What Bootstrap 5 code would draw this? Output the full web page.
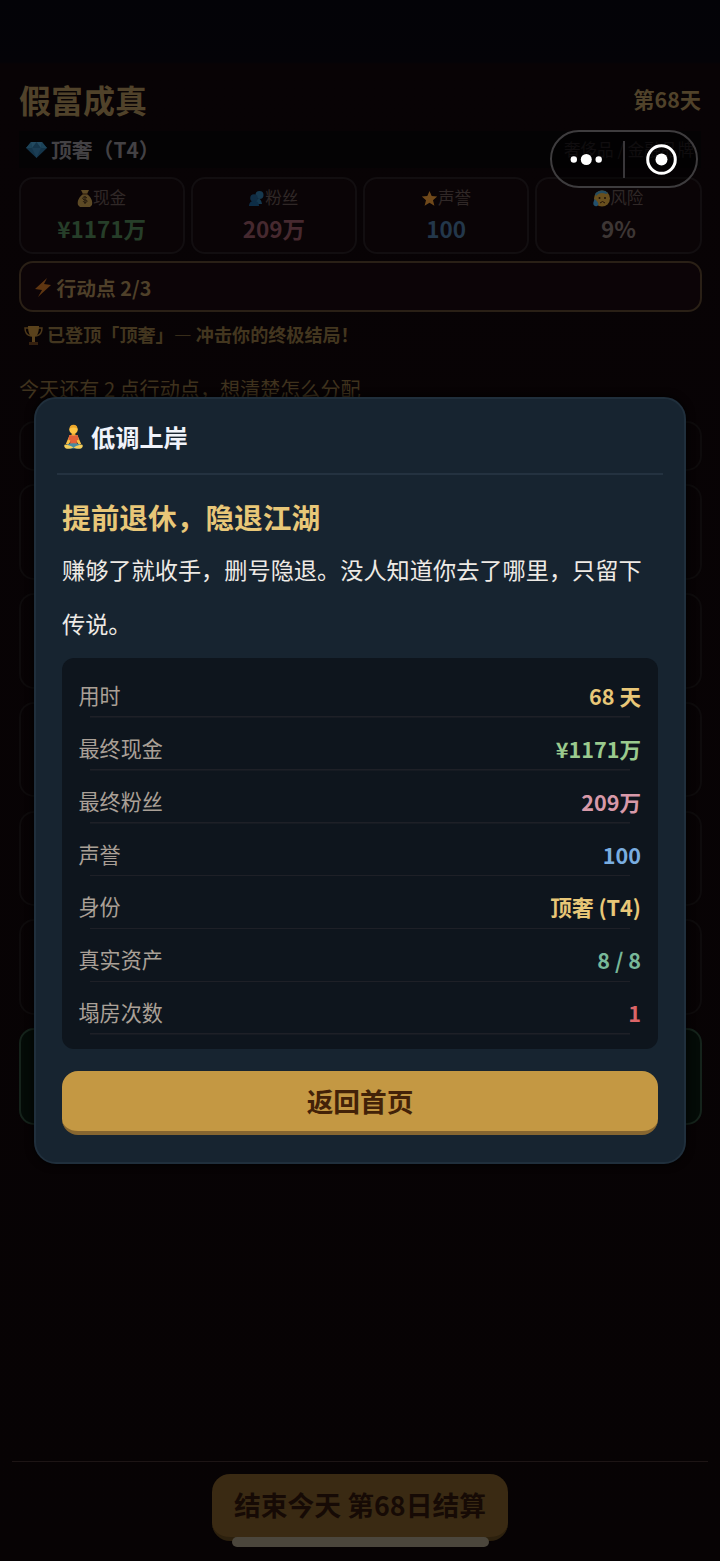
<!DOCTYPE html>
<html lang="zh-CN">
<head>
<meta charset="utf-8">
<meta name="viewport" content="width=device-width, initial-scale=1">
<title>假富成真</title>
<link href="https://cdn.jsdelivr.net/npm/bootstrap@5.3.0/dist/css/bootstrap.min.css" rel="stylesheet">
<style>
body{background:#070304;font-family:"Noto Sans CJK SC",sans-serif;height:1561px;overflow:hidden;line-height:1.2}
.screen{height:1561px;padding-top:69px;background:linear-gradient(#030307 0,#040307 62px,#080305 64px,#070304 100%)}
.topbar{height:62px;padding:0 19px 2px}
.brand{font-size:32px;font-weight:700;color:#50422a}
.day{font-size:21.3px;font-weight:700;color:#50422a}
.tier{height:37px;margin:0 19px;padding:0 7px;background:#040304}
.tier-name{font-size:20.8px;font-weight:700;color:#434144;margin-left:4px}
.tier-tags{font-size:16.6px;color:#1b1719}
.stats{margin:9px 18.5px 0;gap:6px}
.stat{height:77px;border:2px solid #120e10;border-radius:14px;background:#0a0406;padding-top:7px}
.stat-label{height:24px;font-size:16.6px;color:#302827}
.stat-value{height:36px;line-height:36px;font-size:22.5px;font-weight:700}
.points{height:51px;margin:7px 18.5px 0;padding:2px 13px 0;border:2px solid #2a2016;border-radius:14px;background:#0c0407;color:#4f4029;font-size:19.8px;font-weight:700}
.goal{height:44px;padding:2px 24px 0;font-size:18.1px;font-weight:700;color:#43361f}
.hint{height:62px;margin-top:1px;padding-left:19px;font-size:20.1px;line-height:64px;color:#3f321d}
.actions{margin:2px 18.5px 0;gap:13.2px}
.action{height:95.6px;border:2px solid #0e0b0c;border-radius:15px}
.action.short{height:50px}
.action.ending{height:97px;border-color:#15231b;background:#040b07}
.footer-area{margin:335.6px 12px 0;border-top:1px solid #1d1515;padding-top:12px}
.end-day{width:296px;height:67px;border:0;border-radius:18px;background:#3a2a13;border-bottom:4px solid #2d210e;font-size:26.8px;font-weight:700;color:#160a05;padding:0;line-height:62px}
.home-bar{left:232px;top:1537px;width:257px;height:10px;background:#4b463c}
.capsule{left:550px;top:130px;width:148px;height:58px;border:2px solid #3e3c3e;background:rgba(0,0,0,.4)}
.ending-dialog{left:34px;top:397px;width:652px;height:767px;border:2px solid #202f3c;border-radius:22px;background:#172430;box-shadow:0 0 8px #000}
.dialog-head{height:76px;margin:0 21px;padding:2px 6px 0 7px;border-bottom:2px solid #243240;color:#f0f3fa;font-size:24.2px;font-weight:700}
.dialog-content{padding:20px 26px 0}
.ending-name{font-size:28.7px;line-height:44px;font-weight:700;color:#e8c778;margin:0}
.story{font-size:23.2px;line-height:54px;color:#eeeae5;margin:3px 0 8px}
.result{height:391px;border-radius:12px;background:#0e151d;padding:7px 17px 0 16.5px}
.result-row{height:52.85px;padding-top:11px;background:linear-gradient(#1e2027,#1e2027) 50% 100%/calc(100% - 22px) 1.5px no-repeat}
.result-row span{font-size:21.1px;color:#aaa097;line-height:39.5px}
.result-row strong{font-size:21.6px;font-weight:700;line-height:39.5px}
.home-btn{height:64px;margin-top:22px;border:0;border-bottom:4px solid #876630;border-radius:16px;background:#c49843;color:#432208;font-size:26.7px;font-weight:700;padding:0;line-height:60px}
</style>
</head>
<body>
<main class="screen position-relative">
<header class="topbar d-flex align-items-center justify-content-between"><span class="brand">假富成真</span><span class="day">第68天</span></header>
<div class="tier d-flex align-items-center">
<svg width="21" height="18" viewBox="0 0 21 18"><path d="M5 1h11l5 6-10.500 10L0 7z" fill="#15354a"/><path d="M5 1 0 7h6zm11 0-1 6h6z" fill="#1c4358"/><path d="M6 7h9l-4.500 10z" fill="#1b3d54"/><path d="m5 1 1 6 4.500-6L15 7l1-6z" fill="#234a60"/></svg>
<span class="tier-name">顶奢（T4）</span><span class="tier-tags ms-auto">奢侈品 / 金融品牌</span></div>
<section class="stats d-flex text-center">
<div class="stat flex-fill w-25"><div class="stat-label d-flex justify-content-center align-items-center"><svg width="16" height="17" viewBox="0 0 16 17"><path d="M4 0h8l-2 4c4 3 6 7 5 11l-2 2H3l-2-2C0 11 2 7 6 4z" fill="#5d4a25"/><path d="M5 4h6" stroke="#2a190d"/><path d="M10 8c-2-2-5-1-4 1s4 0 4 2-3 2-4 0M8 6v8" stroke="#21170c" fill="none"/></svg>现金</div><div class="stat-value" style="color:#263e29">¥1171万</div></div>
<div class="stat flex-fill w-25"><div class="stat-label d-flex justify-content-center align-items-center"><svg width="16" height="17" viewBox="0 0 16 17"><circle cx="10.500" cy="5" r="4" fill="#16384e"/><path d="M5 16c0-9 11-8 11-2v2z" fill="#0a0406"/><path d="M6 14c1-7 6-7 7 0z" fill="#153950"/><circle cx="5" cy="8" r="3.800" fill="#102d44"/><path d="M0 16c0-7 10-7 10 0z" fill="#0d2d46"/></svg>粉丝</div><div class="stat-value" style="color:#46292f">209万</div></div>
<div class="stat flex-fill w-25"><div class="stat-label d-flex justify-content-center align-items-center"><svg width="17" height="17" viewBox="0 0 17 17"><path d="m8.500 1 2.200 5 5.500.5-4.200 3.700 1.400 5.500-4.900-2.900-4.900 2.900L5 10.200.8 6.500 6.300 6z" fill="#70491a"/></svg>声誉</div><div class="stat-value" style="color:#23374a">100</div></div>
<div class="stat flex-fill w-25"><div class="stat-label d-flex justify-content-center align-items-center"><svg width="17" height="17" viewBox="0 0 17 17"><circle cx="9" cy="8.500" r="8" fill="#69501e"/><path d="M2 4c3-4 9-5 13-1l-2 1C9 2 6 3 3 6z" fill="#244b60"/><circle cx="6.500" cy="8" r="1" fill="#1d1008"/><circle cx="12" cy="8" r="1" fill="#1d1008"/><path d="M7 13q2.500-3 5 0" fill="none" stroke="#211208"/><path d="M2 9c-4 6 0 8 2 7s2-3-2-7z" fill="#23516d"/></svg>风险</div><div class="stat-value" style="color:#3d3634">9%</div></div>
</section>
<div class="points d-flex align-items-center"><svg class="me-1" width="19" height="21" viewBox="0 0 19 21"><path d="M13 1 1 12l7 1-4 7L17 8l-7-1z" fill="#5f3611"/></svg>行动点 2/3</div>
<div class="goal d-flex align-items-center"><svg class="me-1" width="19" height="19" viewBox="0 0 19 19"><path d="M5 2H1q0 7 6 8M14 2h4q0 7-6 8" stroke="#4d3819" stroke-width="1.500" fill="none"/><path d="M4 0h11c0 7-2 10-4 11v5H8v-5C6 10 4 7 4 0z" fill="#5a421c"/><path d="M5 16h9v3H5z" fill="#34200f"/></svg>已登顶「顶奢」— 冲击你的终极结局！</div>
<div class="hint">今天还有 2 点行动点，想清楚怎么分配</div>
<div class="actions d-flex flex-column"><div class="action short"></div><div class="action"></div><div class="action"></div><div class="action"></div><div class="action"></div><div class="action"></div><div class="action ending"></div></div>
<footer class="footer-area text-center"><button class="end-day">结束今天 第68日结算</button></footer>

<div class="home-bar position-absolute rounded-pill"></div>
<div class="capsule position-absolute rounded-pill"><svg class="d-block" width="144" height="54" viewBox="0 0 144 54"><g fill="#fff"><circle cx="21.800" cy="27.500" r="3.200"/><circle cx="34.300" cy="27.500" r="5.500"/><circle cx="46.700" cy="27.500" r="3.200"/><circle cx="109.500" cy="27.500" r="6"/></g><circle cx="109.500" cy="27.500" r="13.800" fill="none" stroke="#fff" stroke-width="3"/><path d="M72 9v37" stroke="#39373a" stroke-width="2"/></svg></div>
<section class="ending-dialog position-absolute">
<div class="dialog-head d-flex align-items-center"><svg width="19" height="26" viewBox="0 0 20 26"><path d="M8 8h4v4H8z" fill="#eba72d"/><path d="M6 11h8l4 9-2 2-4-6v4H8v-4l-4 6-2-2z" fill="#f7bd43"/><path d="M5.500 11q4.500 1 9 0l1 5-2 .5V21h-7v-4.500l-2-.5z" fill="#e46238"/><path d="M3 21q7-3 14 0l-2 4H5z" fill="#478ba0"/><path d="M1 21q3 0 9 3-4 2-8 1-3-2-1-4zm18 0q-3 0-9 3 4 2 8 1 3-2 1-4z" fill="#f4cf5c"/><circle cx="10" cy="5" r="4.500" fill="#ffc544"/><path d="M6 4q0-4 4-4t4 4q-4-2-8 0" fill="#eca62a"/></svg><span class="ms-2">低调上岸</span></div>
<div class="dialog-content"><h1 class="ending-name">提前退休，隐退江湖</h1><p class="story">赚够了就收手，删号隐退。没人知道你去了哪里，只留下传说。</p>
<div class="result">
<div class="result-row d-flex justify-content-between"><span>用时</span><strong style="color:#e8c778">68 天</strong></div>
<div class="result-row d-flex justify-content-between"><span>最终现金</span><strong style="color:#9aca8e">¥1171万</strong></div>
<div class="result-row d-flex justify-content-between"><span>最终粉丝</span><strong style="color:#d799a9">209万</strong></div>
<div class="result-row d-flex justify-content-between"><span>声誉</span><strong style="color:#79ade0">100</strong></div>
<div class="result-row d-flex justify-content-between"><span>身份</span><strong style="color:#e8c778">顶奢 (T4)</strong></div>
<div class="result-row d-flex justify-content-between"><span>真实资产</span><strong style="color:#78b899">8 / 8</strong></div>
<div class="result-row d-flex justify-content-between"><span>塌房次数</span><strong style="color:#db6568">1</strong></div>
</div><button class="home-btn w-100">返回首页</button></div>
</section>
</main>
<script src="https://cdn.jsdelivr.net/npm/bootstrap@5.3.0/dist/js/bootstrap.bundle.min.js"></script>
</body>
</html>
